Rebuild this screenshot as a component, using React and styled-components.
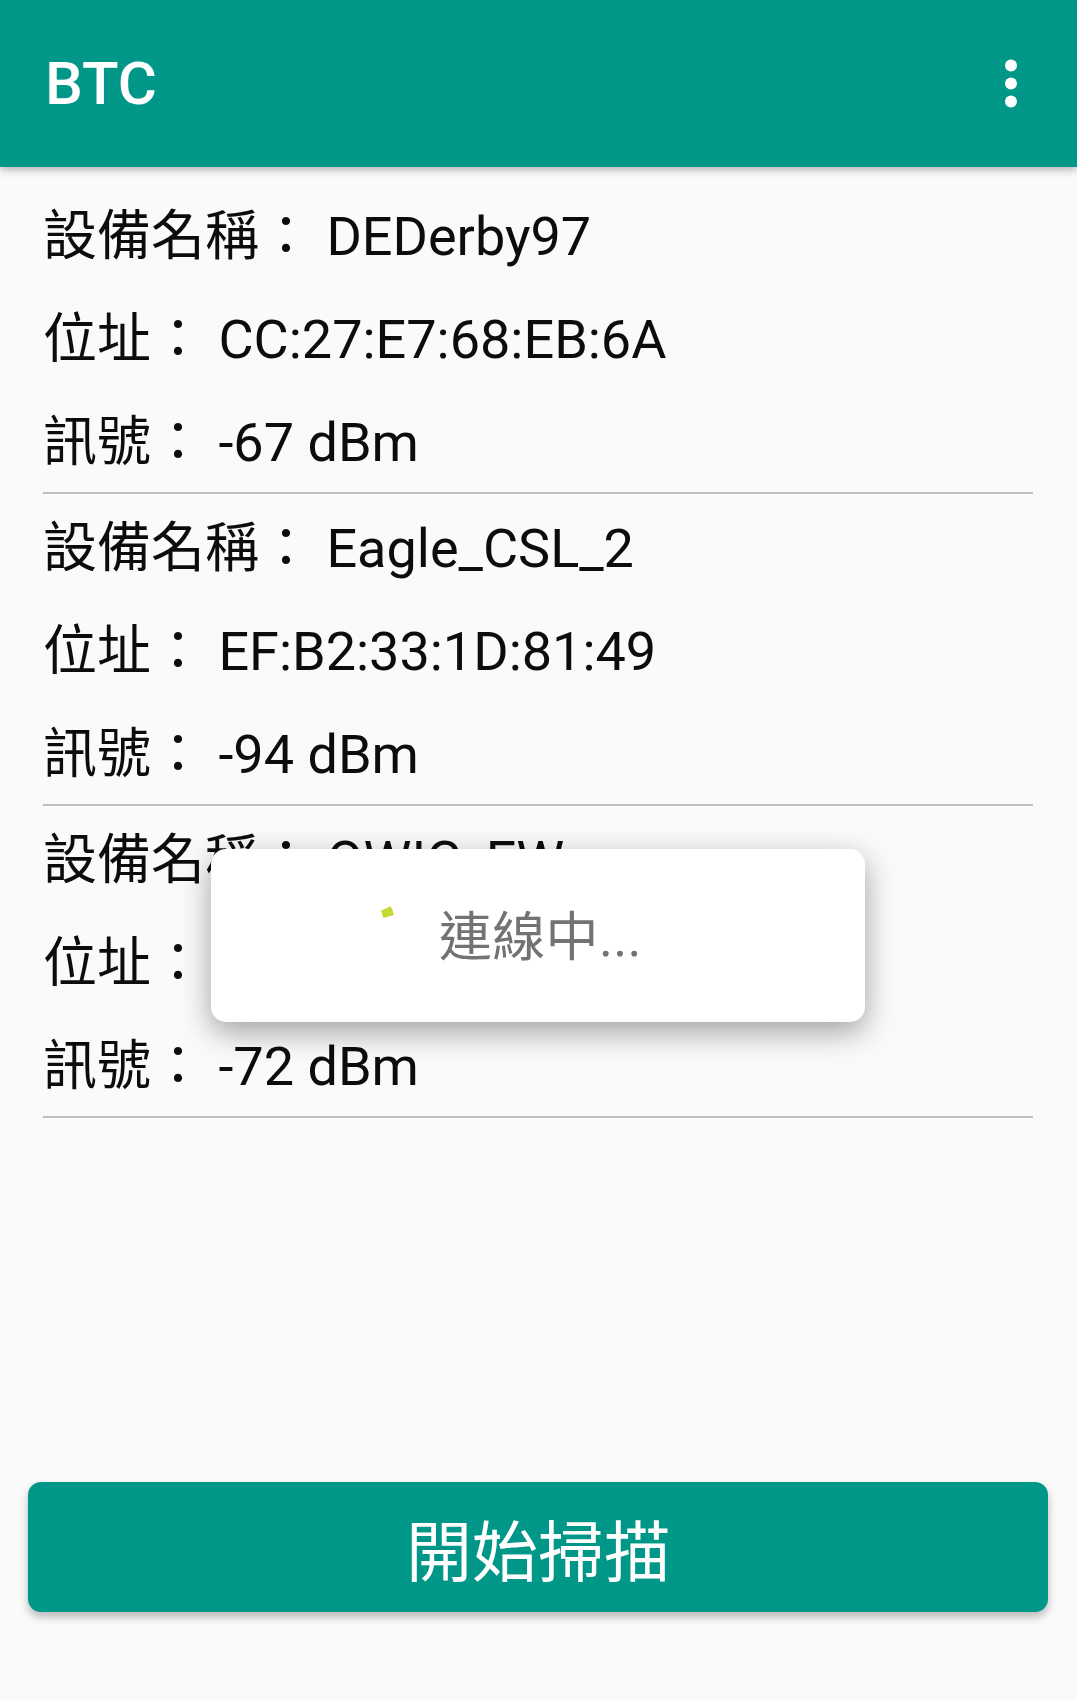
import React from "react";
import styled, { createGlobalStyle } from "styled-components";

const GlobalStyle = createGlobalStyle`
  html, body {
    margin: 0;
    padding: 0;
    background: #fafafa;
  }
  * {
    box-sizing: border-box;
  }
`;

const Page = styled.div`
  position: relative;
  min-height: 100vh;
  display: flex;
  flex-direction: column;
  font-family: Roboto, "Noto Sans CJK TC", sans-serif;
  background: #fafafa;
`;

const AppBar = styled.header`
  height: 167px;
  flex-shrink: 0;
  display: flex;
  align-items: center;
  justify-content: space-between;
  padding: 0 54px 0 45px;
  background: #009688;
  box-shadow: 0 3px 8px rgba(0, 0, 0, 0.28);
  position: relative;
  z-index: 1;
`;

const Title = styled.h1`
  margin: 0;
  color: #fff;
  font-size: 60px;
  font-weight: 500;
`;

const DeviceList = styled.div`
  padding: 14.5px 44px 0 43px;
`;

const Device = styled.div`
  padding-top: 3px;
`;

const Row = styled.div`
  height: 103px;
  line-height: 103px;
  font-size: 54px;
  color: #0c0c0c;
  white-space: nowrap;
`;

const Divider = styled.div`
  height: 2px;
  margin-top: -2px;
  background: #bfbfbf;
`;

const Spacer = styled.div`
  flex: 1;
`;

const ButtonWrap = styled.div`
  padding: 0 29px 88px 28px;
`;

const ScanButton = styled.button`
  width: 100%;
  height: 130px;
  border: none;
  border-radius: 13px;
  background: #009688;
  color: #fff;
  font-family: Roboto, "Noto Sans CJK TC", sans-serif;
  font-size: 66px;
  box-shadow: 0 5px 8px rgba(0, 0, 0, 0.26);
`;

const Dialog = styled.div`
  position: absolute;
  left: 211px;
  top: 849px;
  width: 654px;
  height: 173px;
  border-radius: 15px;
  background: #fff;
  box-shadow: 0 10px 30px rgba(0, 0, 0, 0.36);
  display: flex;
  align-items: center;
  padding: 0 0 6px 48px;
  z-index: 2;
`;

const Spinner = styled.svg`
  width: 144px;
  height: 144px;
  margin-right: 36px;
  flex-shrink: 0;
`;

const Message = styled.span`
  font-size: 53px;
  color: #737373;
  letter-spacing: 0.3px;
`;

const devices = [
  { name: "DEDerby97", address: "CC:27:E7:68:EB:6A", rssi: -67 },
  { name: "Eagle_CSL_2", address: "EF:B2:33:1D:81:49", rssi: -94 },
  { name: "OWIC_EW", address: "D4:36:39:8A:2C:F1", rssi: -72 },
];

const MenuIcon = () => (
  <svg width="24" height="56" viewBox="0 0 24 56">
    <circle cx="12" cy="9.5" r="6" fill="#fff" />
    <circle cx="12" cy="27.5" r="6" fill="#fff" />
    <circle cx="12" cy="45.5" r="6" fill="#fff" />
  </svg>
);

export default function App() {
  return (
    <Page>
      <GlobalStyle />
      <AppBar>
        <Title>BTC</Title>
        <MenuIcon />
      </AppBar>
      <DeviceList>
        {devices.map((d) => (
          <Device key={d.address}>
            <Row>設備名稱： {d.name}</Row>
            <Row>位址： {d.address}</Row>
            <Row>訊號： {d.rssi} dBm</Row>
            <Divider />
          </Device>
        ))}
      </DeviceList>
      <Spacer />
      <ButtonWrap>
        <ScanButton>開始掃描</ScanButton>
      </ButtonWrap>
      <Dialog>
        <Spinner viewBox="0 0 144 144">
          <path
            d="M 126.8 47.6 A 60 60 0 0 1 129.7 55.5"
            fill="none"
            stroke="#c6d834"
            strokeWidth="11"
          />
        </Spinner>
        <Message>連線中...</Message>
      </Dialog>
    </Page>
  );
}
